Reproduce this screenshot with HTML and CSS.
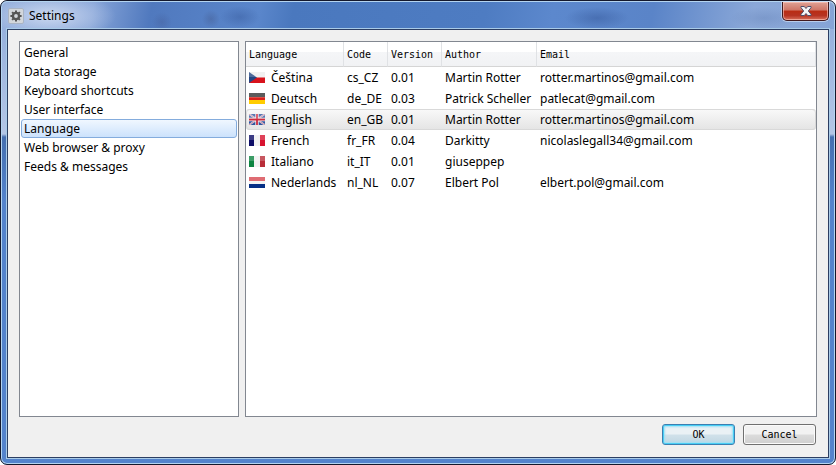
FILE: index.html
```html
<!DOCTYPE html>
<html lang="en">
<head>
  <meta charset="UTF-8">
  <meta name="viewport" content="width=device-width, initial-scale=1.0">
  <title>Settings</title>
  <link rel="stylesheet" href="styles.css">
</head>
<body>
  <div class="window">
    <header class="titlebar">
      <svg class="app-icon" viewBox="0 0 16 16" aria-hidden="true">
        <rect x="0.5" y="0.5" width="15" height="15" rx="1.5" fill="#d3d7dc" stroke="#aab4c4"/>
        <circle cx="8" cy="8" r="3.1" fill="none" stroke="#555" stroke-width="2.4"/>
        <path d="M8 2.4v2M8 11.6v2M2.4 8h2M11.6 8h2M4.1 4.1l1.3 1.3M10.6 10.6l1.3 1.3M4.1 11.9l1.3-1.3M10.6 5.4l1.3-1.3" stroke="#555" stroke-width="2"/>
      </svg>
      <h1>Settings</h1>
      <button class="close" type="button" aria-label="Close">
        <svg viewBox="0 0 12 10" aria-hidden="true">
          <path d="M1 0.5h3.3L6 2.5l1.7-2H11v1.2L8.3 5 11 8.3v1.2H7.7L6 7.5l-1.7 2H1V8.3L3.7 5 1 1.7z" fill="#f4f4f6" stroke="#4f4f6b"/>
        </svg>
      </button>
    </header>

    <main class="client">
      <div class="panels">
        <!-- Categories -->
        <nav class="categories">
          <a href="#general">General</a>
          <a href="#storage">Data storage</a>
          <a href="#shortcuts">Keyboard shortcuts</a>
          <a href="#interface">User interface</a>
          <a href="#language" class="selected">Language</a>
          <a href="#browser">Web browser &amp; proxy</a>
          <a href="#feeds">Feeds &amp; messages</a>
        </nav>

        <!-- Available translations -->
        <section class="languages">
          <table>
            <colgroup>
              <col class="col-language">
              <col class="col-code">
              <col class="col-version">
              <col class="col-author">
              <col>
            </colgroup>
            <thead>
              <tr><th>Language</th><th>Code</th><th>Version</th><th>Author</th><th>Email</th></tr>
            </thead>
            <tbody>
              <tr>
                <td><svg class="flag" viewBox="0 0 16 11"><path fill="#eee" d="M0 0h16v6H0z"/><path fill="#d8131c" d="M0 5.5h16V11H0z"/><path fill="#244683" d="M0 0l8 5.5L0 11z"/><path class="gloss" d="M0 0h16v5H0z"/></svg>Čeština</td>
                <td>cs_CZ</td><td>0.01</td><td>Martin Rotter</td><td>rotter.martinos@gmail.com</td>
              </tr>
              <tr>
                <td><svg class="flag" viewBox="0 0 16 11"><path fill="#333" d="M0 0h16v4H0z"/><path fill="#d8221b" d="M0 4h16v4H0z"/><path fill="#fc0" d="M0 7h16v4H0z"/><path class="gloss" d="M0 0h16v5H0z"/></svg>Deutsch</td>
                <td>de_DE</td><td>0.03</td><td>Patrick Scheller</td><td>patlecat@gmail.com</td>
              </tr>
              <tr class="selected">
                <td><svg class="flag" viewBox="0 0 16 11"><path fill="#32569f" d="M0 0h16v11H0z"/><path d="M0 0l16 11M16 0L0 11" stroke="#d4d9ea" stroke-width="1.8"/><path d="M0 0l16 11M16 0L0 11" stroke="#d05a6a" stroke-width="0.6"/><path d="M8 0v11M0 5.5h16" stroke="#eee" stroke-width="3.4"/><path d="M8 0v11M0 5.5h16" stroke="#ce2b40" stroke-width="1.8"/><path class="gloss" d="M0 0h16v5H0z"/></svg>English</td>
                <td>en_GB</td><td>0.01</td><td>Martin Rotter</td><td>rotter.martinos@gmail.com</td>
              </tr>
              <tr>
                <td><svg class="flag" viewBox="0 0 16 11"><path fill="#0c0c66" d="M0 0h5v11H0z"/><path fill="#f0f0f0" d="M5 0h6v11H5z"/><path fill="#d81330" d="M11 0h5v11h-5z"/><path class="gloss" d="M0 0h16v5H0z"/></svg>French</td>
                <td>fr_FR</td><td>0.04</td><td>Darkitty</td><td>nicolaslegall34@gmail.com</td>
              </tr>
              <tr>
                <td><svg class="flag" viewBox="0 0 16 11"><path fill="#0c8440" d="M0 0h5v11H0z"/><path fill="#f0f0f0" d="M5 0h6v11H5z"/><path fill="#b92d39" d="M11 0h5v11h-5z"/><path class="gloss" d="M0 0h16v5H0z"/></svg>Italiano</td>
                <td>it_IT</td><td>0.01</td><td>giuseppep</td><td></td>
              </tr>
              <tr>
                <td><svg class="flag" viewBox="0 0 16 11"><path fill="#d84850" d="M0 0h16v4H0z"/><path fill="#f2f2f2" d="M0 4h16v3H0z"/><path fill="#052f86" d="M0 7h16v4H0z"/><path class="gloss" d="M0 0h16v5H0z"/></svg>Nederlands</td>
                <td>nl_NL</td><td>0.07</td><td>Elbert Pol</td><td>elbert.pol@gmail.com</td>
              </tr>
            </tbody>
          </table>
        </section>
      </div>

      <footer class="buttons">
        <button class="button default" type="button">OK</button>
        <button class="button" type="button">Cancel</button>
      </footer>
    </main>
  </div>
</body>
</html>
```

FILE: styles.css
```css
* {
  box-sizing: border-box;
}

body {
  margin: 0;
  background: #fff;
  color: #000;
  font-family: "Noto Sans", "Open Sans", sans-serif;
  font-size: 12px;
}

.window {
  display: flex;
  flex-direction: column;
  height: 100vh;
  padding: 0 6px 6px;
  border: 1px solid #14182c;
  border-radius: 7px;
  box-shadow: inset 0 0 0 1px #b4d4f0;
  background: linear-gradient(#8fabdb 0, #b4c6e6 133px, #456fb0 136px, #5483cc 200px, #5483cc 100%);
}

/* Glass title bar */
.titlebar {
  display: flex;
  align-items: center;
  height: 28px;
  flex: none;
  margin: 0 -5px;
  padding-left: 6px;
  border-top: 1px solid #b4d4f0;
  border-radius: 6px 6px 0 0;
  background:
    radial-gradient(ellipse 66px 24px at 48px 14px, rgba(214, 224, 243, 0.85), rgba(214, 224, 243, 0)),
    radial-gradient(ellipse 32px 11px at 595px 16px, rgba(50, 84, 150, 0.45), rgba(50, 84, 150, 0)),
    radial-gradient(ellipse 34px 11px at 762px 16px, rgba(90, 120, 175, 0.3), rgba(90, 120, 175, 0)),
    radial-gradient(ellipse 20px 11px at 238px 15px, rgba(50, 84, 150, 0.4), rgba(50, 84, 150, 0)),
    radial-gradient(circle 9px at 209px 17px, rgba(60, 75, 120, 0.3), rgba(60, 75, 120, 0)),
    radial-gradient(circle 10px at 160px 20px, rgba(60, 75, 130, 0.25), rgba(60, 75, 130, 0)),
    linear-gradient(100deg, #8fabdb 0, #86a4d8 11%, #5079be 18%, #5a86cb 31%, #4a78be 35%, #4e7cc2 58%, #5c88cd 66%, #5a84c8 78%, #8ba8d8 90%, #86a4d6 100%);
}

.app-icon {
  width: 16px;
  height: 16px;
  margin-right: 5px;
}

h1 {
  flex: 1;
  margin: 0;
  font-size: 12px;
  font-weight: normal;
}

.close {
  align-self: flex-start;
  display: flex;
  align-items: center;
  justify-content: center;
  width: 47px;
  height: 19px;
  margin-right: 5px;
  padding: 0;
  border: 1px solid #42191d;
  border-top: 0;
  border-radius: 0 0 5px 5px;
  box-shadow: inset 0 0 0 1px rgba(255, 205, 195, 0.6), 0 0 0 1px rgba(220, 232, 248, 0.6);
  background: linear-gradient(#e0a296, #cf7566 45%, #b92c14 50%, #b63322 75%, #d8705c);
}

.close svg {
  width: 12px;
  height: 10px;
}

.client {
  flex: 1;
  min-height: 0;
  display: flex;
  flex-direction: column;
  gap: 7px;
  padding: 11px 11px 12px;
  border: 1px solid #2c3e62;
  box-shadow: 0 0 0 1px #a9cbe8;
  background: #f0f0f0;
}

.panels {
  flex: 1;
  min-height: 0;
  display: flex;
  gap: 6px;
}

.categories,
.languages {
  border: 1px solid #828790;
  background: #fff;
}

.categories {
  width: 220px;
  padding: 1px;
}

.categories a {
  display: block;
  height: 19px;
  padding: 0 2px;
  border: 1px solid transparent;
  border-radius: 3px;
  color: #000;
  line-height: 17px;
  text-decoration: none;
}

.categories .selected {
  border-color: #84acdd;
  background: linear-gradient(#f0f7ff, #cce2fc);
}

.languages {
  flex: 1;
  overflow: hidden;
}

table {
  width: 100%;
  table-layout: fixed;
  border-collapse: separate;
  border-spacing: 0;
}

.col-language {
  width: 98px;
}

.col-code {
  width: 44px;
}

.col-version {
  width: 54px;
}

.col-author {
  width: 95px;
}

th {
  height: 25px;
  padding: 0 0 0 3px;
  border-right: 1px solid #e0e2e5;
  border-bottom: 1px solid #d5d5d5;
  background: linear-gradient(#fff 40%, #f5f6f8 40%, #f1f2f4);
  font-family: "DejaVu Sans Mono", monospace;
  font-size: 10px;
  font-weight: normal;
  text-align: left;
}

td {
  height: 21px;
  padding: 0 0 0 3px;
  line-height: 19px;
  white-space: nowrap;
}

.flag {
  width: 16px;
  height: 11px;
  margin-right: 6px;
  vertical-align: -1px;
}

.gloss {
  fill: #fff;
  fill-opacity: 0.2;
}

tr.selected td {
  border-top: 1px solid #d9d9d9;
  border-bottom: 1px solid #d9d9d9;
  background: linear-gradient(#f8f8f8, #e5e5e5);
}

tr.selected td:first-child {
  border-radius: 3px 0 0 3px;
  box-shadow: inset 1px 0 #d9d9d9;
}

tr.selected td:last-child {
  border-radius: 0 3px 3px 0;
  box-shadow: inset -1px 0 #d9d9d9;
}

.buttons {
  display: flex;
  justify-content: flex-end;
  gap: 8px;
  padding-right: 1px;
}

.button {
  width: 73px;
  height: 21px;
  padding: 0;
  border: 1px solid #707070;
  border-radius: 3px;
  box-shadow: inset 0 0 0 1px #fbfbfb;
  background: linear-gradient(#f2f2f2 48%, #dcdcdc 52%, #cfcfcf);
  color: #000;
  font-family: "DejaVu Sans Mono", monospace;
  font-size: 10px;
}

.button.default {
  border-color: #3c7fb1;
  box-shadow: inset 0 0 0 1px #48cef5, inset 0 0 2px 2px #9fe0f5;
  background: linear-gradient(#eaf1f5 48%, #d0e1ea 52%, #c0d6e2);
}
```
